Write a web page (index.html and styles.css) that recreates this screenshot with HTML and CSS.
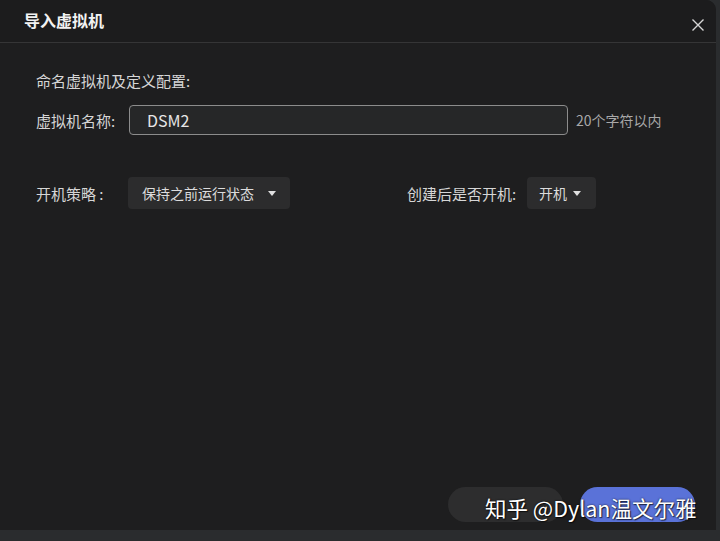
FILE: index.html
```html
<!DOCTYPE html>
<html lang="zh">
<head>
<meta charset="utf-8">
<link rel="stylesheet" href="styles.css">
</head>
<body>
<div class="dialog">
  <div class="header">
    <div class="title">导入虚拟机</div>
    <svg class="close" width="14" height="14" viewBox="0 0 14 14"><path d="M1.5 1.5 L12.5 12.5 M12.5 1.5 L1.5 12.5" stroke="#d6d6d6" stroke-width="1.4" fill="none"/></svg>
  </div>
  <div class="content">
    <div class="section">命名虚拟机及定义配置:</div>
    <div class="row row-name">
      <span class="label">虚拟机名称:</span>
      <div class="input">DSM2</div>
      <span class="hint">20个字符以内</span>
    </div>
    <div class="row row-opts">
      <span class="label">开机策略 :</span>
      <div class="select select-wide"><span>保持之前运行状态</span><span class="caret"></span></div>
      <span class="label label-right">创建后是否开机:</span>
      <div class="select select-small"><span>开机</span><span class="caret"></span></div>
    </div>
  </div>
  <div class="footer">
    <div class="btn btn-gray"></div>
    <div class="btn btn-blue"></div>
  </div>
  <div class="watermark">知乎 @Dylan温文尔雅</div>
</div>
</body>
</html>
```
FILE: styles.css
```css
html, body {
  margin: 0;
  padding: 0;
}
body {
  width: 720px;
  height: 541px;
  background: #2a2c2e;
  font-family: "Noto Sans CJK SC", "Noto Sans", sans-serif;
  overflow: hidden;
}
.dialog {
  position: relative;
  width: 716px;
  height: 530px;
  background: #1e1e1f;
  border-top-right-radius: 10px;
  display: flex;
  flex-direction: column;
}
.header {
  height: 42px;
  border-bottom: 1px solid #353536;
  display: flex;
  align-items: center;
  justify-content: space-between;
  padding: 0 11px 0 24px;
  background: #1c1c1d;
  border-top-right-radius: 10px;
}
.title {
  color: #f2f2f2;
  font-size: 16px;
  font-weight: bold;
  margin-top: -3px;
}
.close {
  margin-top: 8px;
}
.content {
  padding: 0 0 0 36px;
  color: #d6d6d6;
  font-size: 15px;
}
.section {
  margin-top: 28px;
  line-height: 20px;
}
.row {
  display: flex;
  align-items: center;
}
.row-name {
  margin-top: 14px;
}
.label {
  white-space: nowrap;
}
.row-name .label {
  width: 93px;
}
.input {
  width: 420px;
  height: 28px;
  border: 1px solid #8c8c8c;
  border-radius: 4px;
  background: #262728;
  color: #e6e6e6;
  padding-left: 17px;
  font-size: 16px;
  line-height: 28px;
}
.hint {
  margin-left: 8px;
  color: #a8a8a8;
  font-size: 14px;
}
.row-opts {
  margin-top: 42px;
}
.row-opts > .label:first-child {
  width: 92px;
}
.select {
  height: 32px;
  background: #2c2c2d;
  border-radius: 4px;
  display: flex;
  align-items: center;
  justify-content: space-between;
  color: #dcdcdc;
  font-size: 14px;
  box-sizing: border-box;
}
.select-wide {
  width: 162px;
  padding: 0 14px 0 14px;
}
.select-small {
  width: 69px;
  padding: 0 15px 0 12px;
}
.label-right {
  margin-left: 117px;
  width: 120px;
}
.caret {
  width: 0;
  height: 0;
  border-left: 4.5px solid transparent;
  border-right: 4.5px solid transparent;
  border-top: 5px solid #e0e0e0;
}
.footer {
  margin-top: auto;
  display: flex;
  justify-content: flex-end;
  gap: 17px;
  padding: 0 21px 8px 0;
}
.btn {
  width: 115px;
  height: 35px;
  border-radius: 18px;
}
.btn-gray {
  background: #2d2d2e;
}
.btn-blue {
  background: #5a72d8;
}
.watermark {
  position: absolute;
  left: 485px;
  top: 493px;
  color: #ffffff;
  font-size: 21.5px;
  line-height: 30px;
  white-space: nowrap;
  text-shadow: 0 0 2px rgba(0,0,0,0.8), 1px 1px 1px rgba(0,0,0,0.6);
}
```
